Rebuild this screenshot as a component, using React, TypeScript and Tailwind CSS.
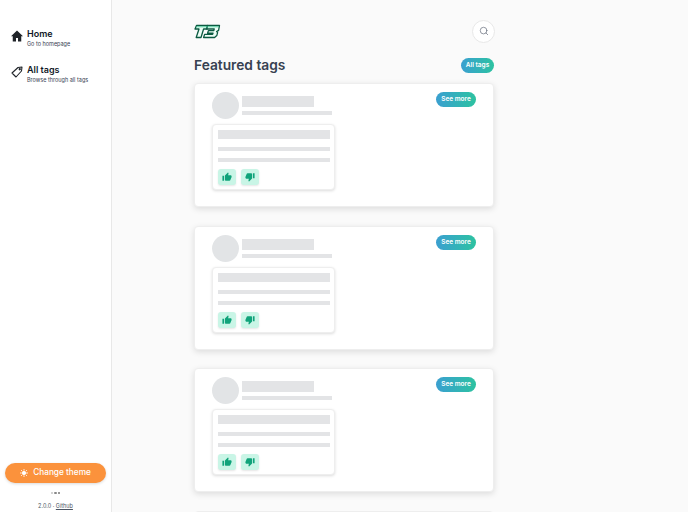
import { Search } from "lucide-react";

function Logo() {
  return (
    <svg width="27" height="15" viewBox="0 0 27 15" className="block">
      <path
        d="M2.5 1.5 H13.5 L12.8 5 H9.6 L7 13.5 H2.2 L5 5 H1 Z"
        fill="#ecfdf5"
        stroke="#0b5a41"
        strokeWidth="1.3"
        strokeLinejoin="round"
      />
      <path
        d="M13.5 1.5 H25.5 L24.6 6.4 L22.6 7.6 L23.6 8.6 L22.8 11.6 L20.6 13.5 H9.6 L10.6 10.4 H18.6 L19 9.2 H13.6 L14.4 6.6 H19.8 L20.2 5 H12.8 Z"
        fill="#ecfdf5"
        stroke="#0b5a41"
        strokeWidth="1.3"
        strokeLinejoin="round"
      />
      <path d="M2.5 2.4 H24.8 L24.6 3.2 H2.2 Z" fill="#34d399" />
    </svg>
  );
}

function ThumbUp() {
  return (
    <svg width="10" height="10" viewBox="0 0 24 24" fill="#10a37a">
      <path d="M1 21h4V9H1v12zM23 10c0-1.1-.9-2-2-2h-6.3l1-4.6v-.3c0-.4-.2-.8-.4-1.1L14.2 1 7.6 7.6C7.2 8 7 8.5 7 9v10c0 1.1.9 2 2 2h9c.8 0 1.5-.5 1.8-1.2l3-7c.1-.2.2-.5.2-.7v-2z" />
    </svg>
  );
}

function ThumbDown() {
  return (
    <svg width="10" height="10" viewBox="0 0 24 24" fill="#10a37a">
      <path d="M15 3H6c-.8 0-1.5.5-1.8 1.2l-3 7c-.1.2-.2.5-.2.7v2c0 1.1.9 2 2 2h6.3l-1 4.6v.3c0 .4.2.8.4 1.1L9.8 23l6.6-6.6c.4-.4.6-.9.6-1.4V5c0-1.1-.9-2-2-2zm4 0v12h4V3h-4z" />
    </svg>
  );
}

function Card() {
  return (
    <div className="bg-white rounded-[4px] border border-[#eeeeee] shadow-[0_2px_6px_rgba(0,0,0,0.12)] h-[124px] shrink-0 px-[17px] pt-[8px]">
      <div className="flex justify-between items-start">
        <div className="flex gap-[3px]">
          <div className="w-[27px] h-[27px] rounded-full bg-[#e2e4e6]" />
          <div className="pt-[4px] flex flex-col gap-[4px]">
            <div className="w-[72px] h-[11px] bg-[#e3e4e6]" />
            <div className="w-[90px] h-[4px] bg-[#e3e4e6]" />
          </div>
        </div>
        <button className="w-[40px] h-[15px] rounded-full bg-gradient-to-r from-[#3b9fd0] to-[#2dc2a0] text-white text-[6.5px] font-semibold flex items-center justify-center leading-none">
          See more
        </button>
      </div>
      <div className="mt-[5px] w-[123px] h-[66px] rounded-[4px] bg-white border border-[#eeeeee] shadow-[0_1px_3px_rgba(0,0,0,0.14)] px-[5px] pt-[5px]">
        <div className="h-[9px] w-[112px] bg-[#e3e4e6]" />
        <div className="h-[4px] w-[112px] bg-[#e3e4e6] mt-[8px]" />
        <div className="h-[4px] w-[112px] bg-[#e3e4e6] mt-[7px]" />
        <div className="flex gap-[5px] mt-[7px]">
          <div className="w-[18px] h-[16px] rounded-[3px] bg-[#c9f5e6] shadow-[0_1px_2px_rgba(0,0,0,0.1)] flex items-center justify-center">
            <ThumbUp />
          </div>
          <div className="w-[18px] h-[16px] rounded-[3px] bg-[#c9f5e6] shadow-[0_1px_2px_rgba(0,0,0,0.1)] flex items-center justify-center">
            <ThumbDown />
          </div>
        </div>
      </div>
    </div>
  );
}

export default function App() {
  return (
    <div className="h-[512px] w-[688px] overflow-hidden flex bg-[#fafafa] font-['Inter',sans-serif] text-[#1f2937]">
      <aside className="w-[112px] shrink-0 bg-white border-r border-[#e8e8e8] flex flex-col pl-[11px] pt-[28px]">
        <div className="flex gap-[4px] items-start">
          <svg width="12" height="12" viewBox="0 0 24 24" fill="#1f2328" className="mt-[1.5px] shrink-0">
            <path d="M12 1 0 12.5h3.5V23h6.5v-7h4v7h6.5V12.5H24z" />
          </svg>
          <div>
            <div className="text-[9px] font-semibold leading-[11px] text-[#111827]">Home</div>
            <div className="text-[5.5px] leading-[8px] mt-[1px] text-[#374151]">Go to homepage</div>
          </div>
        </div>
        <div className="flex gap-[4px] items-start mt-[16px]">
          <svg width="12" height="12" viewBox="0 0 24 24" fill="none" stroke="#1f2328" strokeWidth="2.2" strokeLinejoin="round" className="mt-[1.5px] shrink-0">
            <path d="M2 14 14 3l8-1-1 8L10 22z" />
            <circle cx="17.5" cy="6.5" r="1.2" />
          </svg>
          <div>
            <div className="text-[9px] font-semibold leading-[11px] text-[#111827]">All tags</div>
            <div className="text-[5.5px] leading-[8px] mt-[1px] text-[#374151]">Browse through all tags</div>
          </div>
        </div>
        <div className="mt-auto -ml-[6px] mb-[2px] flex flex-col items-center w-[101px]">
          <button className="w-[101px] h-[20px] rounded-full bg-[#fb923c] shadow-[0_1px_3px_rgba(0,0,0,0.15)] text-white text-[8.25px] font-medium flex items-center justify-center gap-[5px]">
            <svg width="8" height="8" viewBox="0 0 24 24" fill="#fff" stroke="#fff" strokeWidth="2.5" strokeLinecap="round">
              <circle cx="12" cy="12" r="5" />
              <path d="M12 1v3M12 20v3M1 12h3M20 12h3M4 4l2 2M18 18l2 2M4 20l2-2M18 6l2-2" />
            </svg>
            Change theme
          </button>
          <div className="flex gap-[1px] mt-[9px] items-center">
            <span className="w-[2.5px] h-[2.5px] rounded-full bg-[#c4c4c4]" />
            <span className="w-[2.5px] h-[2.5px] rounded-full bg-[#888888]" />
            <span className="w-[2.5px] h-[2.5px] rounded-full bg-[#777777]" />
          </div>
          <div className="text-[5.5px] leading-[8px] mt-[8px] text-[#4b5563]">
            2.0.0 · <span className="underline">Github</span>
          </div>
        </div>
      </aside>
      <main className="w-[300px] ml-[82px] shrink-0 flex flex-col">
        <header className="flex justify-between items-center pt-[20px] h-[42px]">
          <Logo />
          <button className="w-[23px] h-[23px] -mr-[1px] rounded-full bg-white border border-[#e8e8e8] flex items-center justify-center">
            <Search size={10} strokeWidth={1.75} color="#6b7280" />
          </button>
        </header>
        <div className="flex justify-between items-center mt-[16px] h-[15px]">
          <h1 className="text-[13.75px] font-semibold text-[#374151] leading-none">Featured tags</h1>
          <button className="w-[33px] h-[15px] rounded-full bg-gradient-to-r from-[#3b9fd0] to-[#2dc2a0] text-white text-[6.5px] font-semibold flex items-center justify-center leading-none">
            All tags
          </button>
        </div>
        <div className="flex flex-col gap-[18.5px] mt-[10px]">
          <Card />
          <Card />
          <Card />
          <div className="bg-white rounded-[4px] border border-[#eeeeee] h-[124px] shrink-0" />
        </div>
      </main>
    </div>
  );
}
